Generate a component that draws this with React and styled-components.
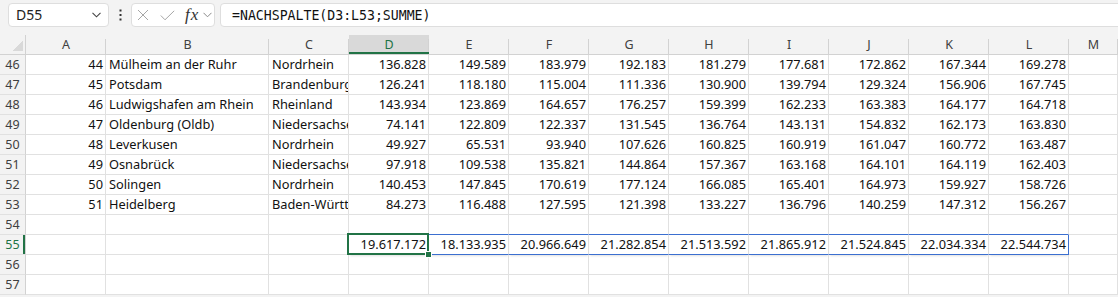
import styled, { createGlobalStyle, css } from "styled-components";

const GREEN = "#217346";
const BLUE = "#3b6fd0";
const GRID = "#e1e1e1";
const HEAD_LINE = "#d2d2d2";

const COLUMNS = ["A", "B", "C", "D", "E", "F", "G", "H", "I", "J", "K", "L", "M"];

const ROWS = [
    { n: 46, a: "44", b: "Mülheim an der Ruhr", c: "Nordrhein", v: ["136.828", "149.589", "183.979", "192.183", "181.279", "177.681", "172.862", "167.344", "169.278"] },
    { n: 47, a: "45", b: "Potsdam", c: "Brandenburg", v: ["126.241", "118.180", "115.004", "111.336", "130.900", "139.794", "129.324", "156.906", "167.745"] },
    { n: 48, a: "46", b: "Ludwigshafen am Rhein", c: "Rheinland", v: ["143.934", "123.869", "164.657", "176.257", "159.399", "162.233", "163.383", "164.177", "164.718"] },
    { n: 49, a: "47", b: "Oldenburg (Oldb)", c: "Niedersachsen", v: ["74.141", "122.809", "122.337", "131.545", "136.764", "143.131", "154.832", "162.173", "163.830"] },
    { n: 50, a: "48", b: "Leverkusen", c: "Nordrhein", v: ["49.927", "65.531", "93.940", "107.626", "160.825", "160.919", "161.047", "160.772", "163.487"] },
    { n: 51, a: "49", b: "Osnabrück", c: "Niedersachsen", v: ["97.918", "109.538", "135.821", "144.864", "157.367", "163.168", "164.101", "164.119", "162.403"] },
    { n: 52, a: "50", b: "Solingen", c: "Nordrhein", v: ["140.453", "147.845", "170.619", "177.124", "166.085", "165.401", "164.973", "159.927", "158.726"] },
    { n: 53, a: "51", b: "Heidelberg", c: "Baden-Württemberg", v: ["84.273", "116.488", "127.595", "121.398", "133.227", "136.796", "140.259", "147.312", "156.267"] },
    { n: 54, a: "", b: "", c: "", v: Array(9).fill(""), spillTop: true },
    { n: 55, a: "", b: "", c: "", v: ["19.617.172", "18.133.935", "20.966.649", "21.282.854", "21.513.592", "21.865.912", "21.524.845", "22.034.334", "22.544.734"], spill: true },
    { n: 56, a: "", b: "", c: "", v: Array(9).fill("") },
    { n: 57, a: "", b: "", c: "", v: Array(9).fill("") },
];

export default function App(){
    return(
        <Window>
            <GlobalStyle />
            <FormulaBar>
                <NameBox>
                    <span>D55</span>
                    <svg width="9" height="6" viewBox="0 0 9 6">
                        <polyline points="0.5,0.8 4.5,4.8 8.5,0.8" fill="none" stroke="#444" strokeWidth="1.1" />
                    </svg>
                </NameBox>

                <Grip>
                    <svg width="3" height="12" viewBox="0 0 3 12">
                        <rect x="0.5" y="0.5" width="2" height="2" fill="#333" />
                        <rect x="0.5" y="5" width="2" height="2" fill="#333" />
                        <rect x="0.5" y="9.5" width="2" height="2" fill="#333" />
                    </svg>
                </Grip>

                <FxBox>
                    <svg width="12" height="12" viewBox="0 0 12 12">
                        <path d="M1 1 L11 11 M11 1 L1 11" stroke="#a6a6a6" strokeWidth="1" fill="none" />
                    </svg>
                    <svg width="15" height="11" viewBox="0 0 15 11">
                        <polyline points="0.8,5.5 5,9.8 14.2,0.8" stroke="#a6a6a6" strokeWidth="1" fill="none" />
                    </svg>
                    <Fx>fx</Fx>
                    <svg width="9" height="6" viewBox="0 0 9 6">
                        <polyline points="0.5,0.8 4.5,4.8 8.5,0.8" fill="none" stroke="#8a8a8a" strokeWidth="1" />
                    </svg>
                </FxBox>

                <FormulaInput>=NACHSPALTE(D3:L53;SUMME)</FormulaInput>
            </FormulaBar>

            <Sheet>
                <Corner />
                {COLUMNS.map(c => (
                    <ColHead key={c} $selected={c === "D"}>{c}</ColHead>
                ))}

                {ROWS.map(r => (
                    <Row key={r.n} r={r} />
                ))}
            </Sheet>
        </Window>
    );
}

function Row({ r }){
    return(
        <>
            <RowHead $selected={r.n === 55}>{r.n}</RowHead>
            <Cell $align="right">{r.a}</Cell>
            <Cell>{r.b}</Cell>
            <Cell>{r.c}</Cell>
            {r.v.map((val, i) => (
                <Cell
                    key={i}
                    $align="right"
                    $spillTop={r.spillTop}
                    $spill={r.spill}
                    $spillEnd={r.spill && i === 8}
                    $active={r.spill && i === 0}
                >
                    {val}
                </Cell>
            ))}
            <Cell />
        </>
    );
}




/* ------------------- styles ------------------- */
const GlobalStyle = createGlobalStyle`
    html, body{
        margin: 0;
        padding: 0;
        background: #f3f3f3;
    }

    *{
        box-sizing: border-box;
    }
`;

const Window = styled.div`
    width: 1118px;
    height: 297px;
    overflow: hidden;
    background: #f3f3f3;
    font-family: "Noto Sans", sans-serif;
`;

const FormulaBar = styled.div`
    height: 35px;
    padding: 3px 0 0 8px;

    display: flex;
    align-items: flex-start;
`;

const NameBox = styled.div`
    width: 101px;
    height: 24px;
    padding: 0 7px 0 7px;

    display: flex;
    align-items: center;
    justify-content: space-between;

    background: #fff;
    border: 1px solid #dedede;
    border-radius: 4px;

    font-size: 14px;
    color: #222;

    span{
        margin-top: -1px;
    }
`;

const Grip = styled.div`
    width: 22px;
    height: 24px;

    display: flex;
    align-items: center;
    justify-content: center;
`;

const FxBox = styled.div`
    width: 84px;
    height: 24px;
    padding: 0 0 0 5px;

    display: flex;
    align-items: center;

    background: #fff;
    border: 1px solid #dedede;
    border-radius: 4px;

    svg:nth-of-type(2){
        margin-left: 11px;
    }

    svg:nth-of-type(3){
        margin-left: 4px;
    }
`;

const Fx = styled.span`
    margin-left: 10px;
    margin-top: -2px;
    font-family: "Liberation Serif", serif;
    font-style: italic;
    font-size: 17px;
    letter-spacing: 1px;
    line-height: 1;
    color: #333;
`;

const FormulaInput = styled.div`
    flex: 1;
    height: 24px;
    margin-left: 5px;
    margin-right: -6px;
    padding: 0 0 0 11px;

    display: flex;
    align-items: center;

    background: #fff;
    border: 1px solid #dedede;
    border-radius: 4px;

    font-family: "DejaVu Sans Mono", monospace;
    font-size: 13.2px;
    color: #111;
`;

const Sheet = styled.div`
    display: grid;
    grid-template-columns: 26px 80px 163px repeat(10, 80px) 1fr;
    grid-auto-rows: 20px;

    background: #fff;
    font-size: 12.8px;
    line-height: 19px;
    color: #111;
`;

const HeadBase = css`
    background-color: #f3f3f3;
    color: #404040;
    text-align: center;
    white-space: nowrap;
    font-size: 12.5px;
`;

const Corner = styled.div`
    ${HeadBase};
    border-right: 1px solid ${HEAD_LINE};
    border-bottom: 1px solid ${HEAD_LINE};
    background-image: linear-gradient(to bottom right, transparent 50%, #d9d9d9 50%);
    background-repeat: no-repeat;
    background-size: 11px 11px;
    background-position: right 2px bottom 3px;
`;

const ColHead = styled.div`
    ${HeadBase};
    border-bottom: 1px solid ${HEAD_LINE};
    background-image: linear-gradient(${HEAD_LINE}, ${HEAD_LINE});
    background-repeat: no-repeat;
    background-size: 1px 15px;
    background-position: right bottom;

    ${p => p.$selected && css`
        background-color: #d9d9d9;
        color: ${GREEN};
        box-shadow: inset 0 -2px 0 ${GREEN};
    `}
`;

const RowHead = styled.div`
    ${HeadBase};
    border-right: 1px solid ${HEAD_LINE};
    border-bottom: 1px solid ${GRID};

    ${p => p.$selected && css`
        color: ${GREEN};
        box-shadow: inset -2px 0 0 ${GREEN};
    `}
`;

const Cell = styled.div`
    padding: 0 2px 0 3px;
    border-right: 1px solid ${GRID};
    border-bottom: 1px solid ${GRID};
    text-align: ${p => p.$align || "left"};
    white-space: nowrap;
    overflow: hidden;

    ${p => p.$spillTop && css`
        border-bottom-color: ${BLUE};
    `}

    ${p => p.$spill && css`
        border-bottom-color: ${BLUE};
        box-shadow: 0 2px 2px -1px rgba(0, 0, 0, 0.12);
    `}

    ${p => p.$spillEnd && css`
        border-right-color: ${BLUE};
    `}

    ${p => p.$active && css`
        position: relative;
        z-index: 1;
        overflow: visible;

        &::after{
            content: "";
            position: absolute;
            top: -2px;
            left: -2px;
            right: -1px;
            bottom: -1px;
            border: 2px solid ${GREEN};
        }

        &::before{
            content: "";
            position: absolute;
            right: -3px;
            bottom: -3px;
            width: 5px;
            height: 5px;
            background: ${GREEN};
            outline: 1px solid #fff;
            z-index: 1;
        }
    `}
`;
